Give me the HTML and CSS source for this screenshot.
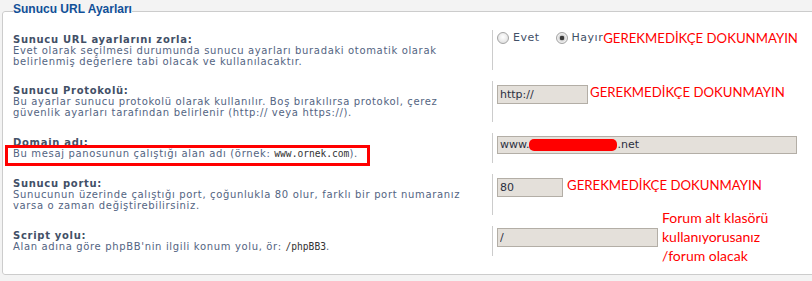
FILE: index.html
```html
<!DOCTYPE html>
<html lang="tr">
  <head>
    <meta charset="UTF-8" />
    <meta name="viewport" content="width=device-width, initial-scale=1.0" />
    <title>Sunucu URL Ayarları</title>
    <link rel="stylesheet" href="styles.css">
  </head>
  <body>
    <fieldset class="settings">
      <legend>Sunucu URL Ayarları</legend>

      <dl class="row row-first">
        <dt>
          <label>Sunucu URL ayarlarını zorla:</label>
          <span class="explain">Evet olarak seçilmesi durumunda sunucu ayarları buradaki otomatik olarak<br>belirlenmiş değerlere tabi olacak ve kullanılacaktır.</span>
        </dt>
        <dd>
          <div class="control choice">
            <span class="radio"></span><span class="choice-text gap">Evet</span>
            <span class="radio checked"></span><span class="choice-text">Hayır</span>
            <span class="note">GEREKMEDİKÇE DOKUNMAYIN</span>
          </div>
        </dd>
      </dl>

      <dl class="row">
        <dt>
          <label>Sunucu Protokolü:</label>
          <span class="explain">Bu ayarlar sunucu protokolü olarak kullanılır. Boş bırakılırsa protokol, çerez<br>güvenlik ayarları tarafından belirlenir (http:// veya https://).</span>
        </dt>
        <dd>
          <div class="control">
            <input class="field field-proto" type="text" value="http://">
            <span class="note note-proto">GEREKMEDİKÇE DOKUNMAYIN</span>
          </div>
        </dd>
      </dl>

      <dl class="row">
        <dt>
          <label>Domain adı:</label>
          <span class="explain"><span class="boxed">Bu mesaj panosunun çalıştığı alan adı (örnek: <samp>www.ornek.com</samp>).</span></span>
        </dt>
        <dd>
          <div class="control">
            <div class="field field-domain">www.<span class="redact"></span>.net</div>
          </div>
        </dd>
      </dl>

      <dl class="row">
        <dt>
          <label>Sunucu portu:</label>
          <span class="explain">Sunucunun üzerinde çalıştığı port, çoğunlukla 80 olur, farklı bir port numaranız<br>varsa o zaman değiştirebilirsiniz.</span>
        </dt>
        <dd>
          <div class="control">
            <input class="field field-port" type="text" value="80">
            <span class="note note-port">GEREKMEDİKÇE DOKUNMAYIN</span>
          </div>
        </dd>
      </dl>

      <dl class="row">
        <dt>
          <label>Script yolu:</label>
          <span class="explain">Alan adına göre phpBB'nin ilgili konum yolu, ör: <samp>/phpBB3</samp>.</span>
        </dt>
        <dd class="with-hint">
          <div class="control">
            <input class="field field-path" type="text" value="/">
          </div>
          <span class="note hint">Forum alt klasörü<br>kullanıyorusanız<br>/forum olacak</span>
        </dd>
      </dl>
    </fieldset>
  </body>
</html>
```

FILE: styles.css
```css
body {
  margin: 0;
  padding: 0;
  background-color: #f3f3f3;
  font-family: "DejaVu Sans", Verdana, sans-serif;
  overflow: hidden;
}

.settings {
  margin: 0 0 0 2px;
  width: 1200px;
  padding: 8px 10px 18px;
  border: 1px solid #cccccc;
  border-radius: 3px;
  background: #ffffff;
  min-width: 0;
}
.settings legend {
  padding: 3px 0 7px;
  font: bold 12px/12px "Liberation Sans", Arial, sans-serif;
  color: #115098;
}

.row {
  display: flex;
  margin: 0 0 11px;
}
.row:last-child {
  margin-bottom: 0;
}
.row dt {
  width: 479px;
  padding: 4px 0;
  font-size: 10px;
  line-height: 11px;
  letter-spacing: 0.65px;
}
.row-first dt {
  padding-bottom: 3px;
}
.row dt label {
  display: block;
  font-weight: bold;
  letter-spacing: 0.7px;
  color: #425067;
}
.explain {
  display: block;
  color: #536482;
}
samp {
  font-family: "DejaVu Sans Mono", monospace;
  font-size: 9.6px;
  letter-spacing: 0;
  color: #333333;
}
.boxed {
  position: relative;
}
.boxed::after {
  content: "";
  position: absolute;
  left: -8px;
  top: -3px;
  right: -12px;
  bottom: -7px;
  border: 3px solid #ff0000;
}

.row dd {
  margin: 0;
  padding: 2px 0 0 4px;
  border-left: 1px solid #cccccc;
}
.control {
  display: flex;
  align-items: center;
}

.choice {
  height: 12px;
}
.radio {
  box-sizing: border-box;
  width: 12px;
  height: 12px;
  border: 1px solid #a4a4a4;
  border-radius: 50%;
  background: radial-gradient(circle at 50% 40%, #ffffff 0, #f0f0f0 40%, #d6d6d6 100%);
  margin-right: 4px;
}
.radio.checked {
  background: radial-gradient(circle, #3a3a3a 0, #3a3a3a 2px, #cfcfcf 2.6px, #efefef 60%, #d9d9d9 100%);
}
.choice-text {
  font-size: 11px;
  line-height: 12px;
  letter-spacing: 0.5px;
  color: #425067;
}
.choice-text.gap {
  margin-right: 16px;
}
.choice .note {
  line-height: 12px;
}

.field {
  box-sizing: border-box;
  height: 19px;
  margin: 0;
  padding: 0 2px;
  border: 1px solid #b3aea6;
  background: #e4e0da;
  font-family: "DejaVu Sans", Verdana, sans-serif;
  font-size: 11px;
  color: #2b2f3f;
  outline: none;
}
.field-proto {
  width: 91px;
}
.field-port {
  width: 66px;
}
.field-path {
  width: 161px;
}
.field-domain {
  display: flex;
  align-items: center;
  width: 300px;
  height: 18px;
  margin-top: 1px;
  line-height: 12px;
}
.redact {
  display: inline-block;
  width: 88px;
  height: 12px;
  border-radius: 5px;
  background: #ff0000;
}

.note {
  color: #ff0000;
  font-family: Lato, "Open Sans", sans-serif;
  font-size: 13.2px;
  line-height: 19px;
  white-space: nowrap;
}
.note-proto {
  margin-left: 2px;
  margin-bottom: 4px;
}
.note-port {
  margin-left: 4px;
  margin-bottom: 4px;
}

.with-hint {
  position: relative;
}
.hint {
  position: absolute;
  left: 169px;
  top: -18px;
  font-size: 14px;
}
```
